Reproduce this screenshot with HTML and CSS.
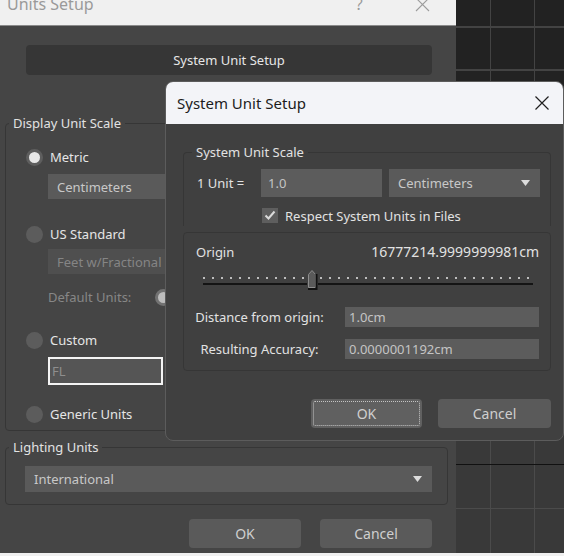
FILE: index.html
```html
<!DOCTYPE html>
<html>
<head>
<meta charset="utf-8">
<title>Units Setup</title>
<link rel="stylesheet" href="styles.css">
</head>
<body>
<div class="screen">
  <div class="desk">
    <section class="units">
      <header class="units-title">
        <span class="units-title-text">Units Setup</span>
        <span class="units-help">?</span>
        <svg class="units-close" width="15" height="15" viewBox="0 0 15 15"><path d="M1 1L14 14M14 1L1 14" stroke="#9c9c9c" stroke-width="1.1" fill="none"/></svg>
      </header>
      <div class="units-body">
        <button class="wide-btn">System Unit Setup</button>
        <fieldset class="group display-group">
          <legend>Display Unit Scale</legend>
          <div class="radio-row"><span class="radio radio-on"></span><span>Metric</span></div>
          <div class="dropdown dd-metric">Centimeters</div>
          <div class="radio-row row-us"><span class="radio"></span><span>US Standard</span></div>
          <div class="dropdown dd-feet">Feet w/Fractional Inches</div>
          <div class="default-row"><span class="default-label">Default Units:</span><span class="radio radio-dis"></span></div>
          <div class="radio-row row-custom"><span class="radio"></span><span>Custom</span></div>
          <div class="fl-input">FL</div>
          <div class="radio-row row-generic"><span class="radio"></span><span>Generic Units</span></div>
        </fieldset>
        <fieldset class="group lighting-group">
          <legend>Lighting Units</legend>
          <div class="dropdown dd-light"><span>International</span><svg class="arrow" width="9" height="6" viewBox="0 0 9 6"><path d="M0 0H9L4.5 6Z" fill="#dcdcdc"/></svg></div>
        </fieldset>
        <div class="units-actions"><button class="btn">OK</button><button class="btn">Cancel</button></div>
      </div>
    </section>
    <div class="viewport">
      <div class="vp-top"></div>
      <div class="vp-bottom"></div>
    </div>
  </div>
  <div class="taskbar-edge"></div>

  <section class="sus">
    <header class="sus-title">
      <span>System Unit Setup</span>
      <svg class="sus-close" width="16" height="16" viewBox="0 0 16 16"><path d="M1.5 1.5L14.5 14.5M14.5 1.5L1.5 14.5" stroke="#1f1f1f" stroke-width="1.2" fill="none"/></svg>
    </header>
    <div class="sus-body">
      <fieldset class="group scale-group">
        <legend>System Unit Scale</legend>
        <div class="unit-row">
          <span class="unit-label">1 Unit =</span>
          <div class="field unit-val">1.0</div>
          <div class="dropdown dd-unit"><span>Centimeters</span><svg class="arrow" width="9" height="6" viewBox="0 0 9 6"><path d="M0 0H9L4.5 6Z" fill="#dcdcdc"/></svg></div>
        </div>
        <div class="check-row">
          <span class="checkbox"><svg width="16" height="15" viewBox="0 0 16 15"><path d="M3.5 7.5L6.5 10.5L12.5 3.5" stroke="#dadada" stroke-width="2" fill="none"/></svg></span>
          <span>Respect System Units in Files</span>
        </div>
      </fieldset>
      <div class="origin-box">
        <div class="origin-row"><span>Origin</span><span class="origin-val">16777214.9999999981cm</span></div>
        <div class="slider">
          <span class="slider-thumb"><svg width="11" height="21" viewBox="0 0 11 21"><path d="M1.5 5.5L5 1.5L8.5 5.5V18.5H1.5Z" fill="#5a5a5a" stroke="#8c8c8c" stroke-width="1"/><path d="M9.5 5V20H1" stroke="#111" stroke-width="2" fill="none"/></svg></span>
        </div>
        <div class="info-row"><span class="info-label">Distance from origin:</span><div class="field info-val">1.0cm</div></div>
        <div class="info-row row-acc"><span class="info-label">Resulting Accuracy:</span><div class="field info-val">0.0000001192cm</div></div>
      </div>
      <div class="sus-actions"><button class="btn btn-ok">OK</button><button class="btn btn-cancel">Cancel</button></div>
    </div>
  </section>
</div>
</body>
</html>
```

FILE: styles.css
```css
* { box-sizing: border-box; }
html, body { margin: 0; padding: 0; }
body {
  font-family: "Noto Sans", "DejaVu Sans", sans-serif;
  font-size: 13px;
  color: #e0e0e0;
  background: #f0f0f0;
}
.screen {
  position: relative;
  width: 564px;
  height: 556px;
  overflow: hidden;
}
.desk {
  display: flex;
  height: 553px;
}
.taskbar-edge {
  height: 3px;
  background: #f0f0f0;
}

/* ---------- outer dialog ---------- */
.units {
  width: 456px;
  display: flex;
  flex-direction: column;
  background: #454545;
}
.units-title {
  height: 26px;
  flex: none;
  background: #f0f0f0;
  border-bottom: 1px solid #8a8a8a;
  display: flex;
  align-items: flex-start;
  padding-left: 7px;
  color: #9a9a9a;
  font-size: 16px;
  overflow: hidden;
}
.units-title-text {
  line-height: 20px;
  margin-top: -6px;
}
.units-help {
  line-height: 20px;
  margin-top: -6px;
  margin-left: 262px;
}
.units-close {
  margin-top: -3px;
  margin-left: 52px;
}
.units-body {
  flex: 1;
  display: flex;
  flex-direction: column;
  padding: 0 8px 0 5px;
}
.wide-btn {
  margin: 19px 16px 0 21px;
  height: 30px;
  border: none;
  border-radius: 4px;
  background: #363636;
  color: #e6e6e6;
  font: inherit;
  font-size: 13px;
  padding: 0;
}

.group {
  margin: 0;
  border: 1px solid #363636;
  border-radius: 4px;
  padding: 0;
  min-width: 0;
}
.group legend {
  font-size: 13px;
  line-height: 16px;
  padding: 0 4px;
  color: #e2e2e2;
}
.display-group {
  margin-top: 40px;
  padding: 17px 0 7px 20px;
  display: flex;
  flex-direction: column;
}
.display-group legend { margin-left: -17px; }
.radio-row {
  display: flex;
  align-items: center;
  height: 18px;
  gap: 7px;
  color: #e6e6e6;
}
.radio {
  width: 17px;
  height: 17px;
  border-radius: 50%;
  background: #5c5c5c;
  flex: none;
}
.radio-on {
  background: #e8e8e8;
  border: 3px solid #5e5e5e;
}
.radio-dis {
  background: #bdbdbd;
  border: 3px solid #727272;
}
.dropdown {
  height: 25px;
  background: #5a5a5a;
  color: #c8c8c8;
  padding: 0 10px 0 9px;
  display: flex;
  align-items: center;
  justify-content: space-between;
}
.dd-metric {
  margin: 8px 27px 0 22px;
}
.row-us { margin-top: 26px; }
.dd-feet {
  margin: 6px 27px 0 22px;
  background: #4f4f4f;
  color: #858585;
}
.default-row {
  margin: 14px 0 0 22px;
  height: 18px;
  display: flex;
  align-items: center;
  color: #878787;
}
.default-label { width: 107px; }
.row-custom { margin-top: 25px; }
.fl-input {
  margin: 8px 0 0 22px;
  width: 115px;
  height: 28px;
  border: 2px solid #f4f4f4;
  background: #555;
  color: #8e8e8e;
  padding-left: 2px;
  line-height: 24px;
}
.row-generic { margin-top: 20px; }

.lighting-group {
  margin-top: 8px;
  padding: 11px 15px 12px 19px;
}
.lighting-group legend { margin-left: -16px; }
.dd-light {
  height: 26px;
}
.units-actions {
  display: flex;
  justify-content: flex-end;
  gap: 19px;
  margin: 14px 16px 0 0;
}
.btn {
  height: 29px;
  width: 112px;
  border: none;
  border-radius: 4px;
  background: #5a5a5a;
  color: #cfcfcf;
  font: inherit;
  font-size: 14px;
  padding: 0;
}

/* ---------- viewport ---------- */
.viewport {
  flex: 1;
  display: flex;
  flex-direction: column;
}
.vp-top {
  height: 260px;
  background-color: #222;
  background-image:
    linear-gradient(#434343, #434343),
    linear-gradient(#434343, #434343),
    linear-gradient(#434343, #434343),
    linear-gradient(#434343, #434343);
  background-size: 1px 100%, 1px 100%, 100% 2px, 100% 2px;
  background-position: 34px 0, 78px 0, 0 26px, 0 69px;
  background-repeat: no-repeat;
}
.vp-bottom {
  flex: 1;
  background-color: #393939;
  background-image:
    linear-gradient(#111, #111),
    linear-gradient(#4b4b4b, #4b4b4b),
    linear-gradient(#4b4b4b, #4b4b4b),
    linear-gradient(#4b4b4b, #4b4b4b);
  background-size: 100% 1px, 1px 100%, 1px 100%, 100% 1px;
  background-position: 0 204px, 34px 0, 78px 0, 0 248px;
  background-repeat: no-repeat;
}

/* ---------- System Unit Setup dialog ---------- */
.sus {
  position: absolute;
  left: 165px;
  top: 81px;
  width: 399px;
  height: 360px;
  border: 1px solid #5c5c5c;
  border-radius: 8px;
  background: #404040;
  overflow: hidden;
  display: flex;
  flex-direction: column;
}
.sus-title {
  height: 42px;
  flex: none;
  background: #f3f4f8;
  color: #1c1c1c;
  font-size: 15px;
  display: flex;
  align-items: center;
  justify-content: space-between;
  padding: 0 13px 0 11px;
}
.sus-body {
  padding: 0 12px 0 17px;
  display: flex;
  flex-direction: column;
}
.scale-group {
  margin-top: 20px;
  padding: 9px 10px 3px 13px;
  border-bottom: none;
  border-bottom-left-radius: 0;
  border-bottom-right-radius: 0;
}
.scale-group legend { margin-left: -5px; }
.unit-row {
  display: flex;
  align-items: center;
  height: 28px;
}
.unit-label {
  width: 64px;
  color: #e2e2e2;
}
.field {
  background: #5c5c5c;
  color: #c4c4c4;
  padding-left: 7px;
  display: flex;
  align-items: center;
}
.unit-val {
  width: 121px;
  height: 28px;
}
.dd-unit {
  margin-left: 7px;
  flex: 1;
  height: 28px;
}
.check-row {
  display: flex;
  align-items: center;
  height: 15px;
  margin: 11px 0 0 65px;
  gap: 7px;
  color: #e2e2e2;
}
.checkbox {
  width: 16px;
  height: 15px;
  background: #5e5e5e;
  display: block;
}
.checkbox svg { display: block; }

.origin-box {
  margin-top: 6px;
  border: 1px solid #363636;
  border-radius: 4px;
  padding: 11px 11px 11px 0;
}
.origin-row {
  height: 16px;
  line-height: 16px;
  display: flex;
  justify-content: space-between;
  padding-left: 12px;
  color: #e2e2e2;
}
.origin-val {
  font-size: 14px;
}
.slider {
  position: relative;
  height: 20px;
  margin: 10px 6px 0 19px;
  background-image:
    linear-gradient(to right, #bdbdbd 0 2px, transparent 2px),
    linear-gradient(#141414, #141414);
  background-size: 9px 2px, 100% 2px;
  background-position: 0 7px, 0 13px;
  background-repeat: repeat-x, no-repeat;
}
.slider-thumb {
  position: absolute;
  left: 104px;
  top: -1px;
  width: 11px;
  height: 21px;
  background: #404040;
}
.slider-thumb svg { display: block; }
.info-row {
  display: flex;
  align-items: center;
  height: 20px;
  margin-top: 17px;
}
.row-acc { margin-top: 12px; }
.info-label {
  width: 151px;
  text-align: center;
  color: #e2e2e2;
}
.info-val {
  margin-left: 10px;
  flex: 1;
  height: 20px;
  padding-left: 4px;
}
.sus-actions {
  display: flex;
  justify-content: flex-end;
  gap: 16px;
  margin-top: 28px;
}
.btn-ok {
  width: 111px;
  background: #606060;
  outline: 1px dotted #c4c4c4;
  outline-offset: -3px;
}
.btn-cancel {
  width: 113px;
}
```
